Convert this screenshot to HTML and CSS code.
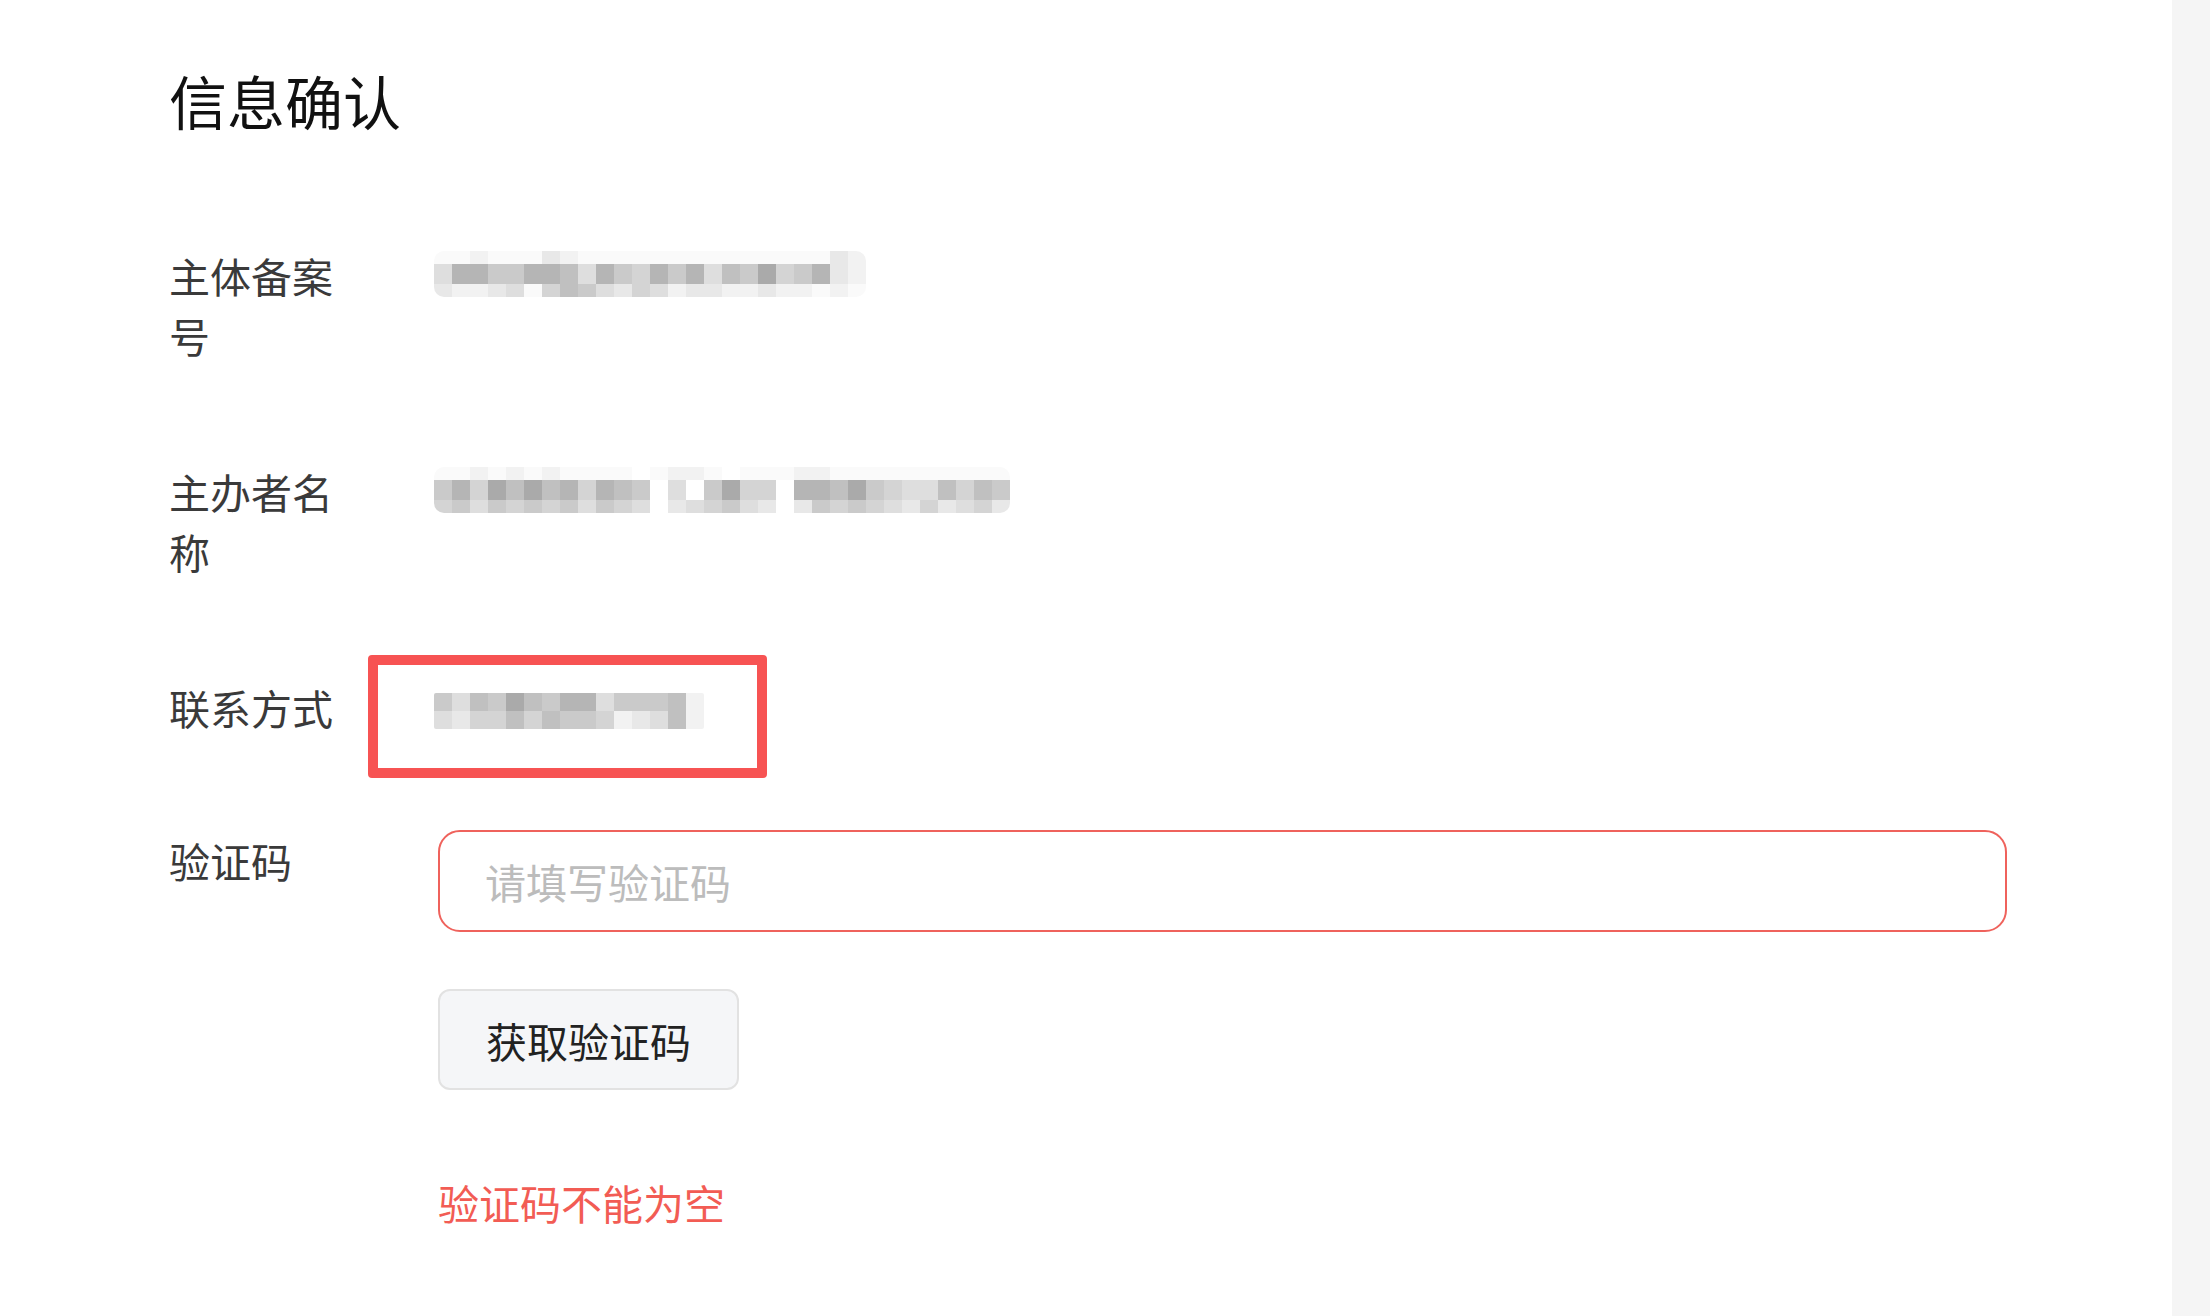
FILE: index.html
```html
<!DOCTYPE html>
<html lang="zh-CN">
<head>
    <meta charset="UTF-8">
    <meta name="viewport" content="width=device-width, initial-scale=1.0">
    <title>信息确认</title>
    <link rel="stylesheet" href="styles.css">
</head>
<body>
    <div class="page">
        <!-- 表单内容 -->
        <main class="content">
            <h1 class="title">信息确认</h1>

            <!-- 主体备案号 -->
            <div class="row">
                <div class="label">主体备案号</div>
                <div class="value">
                    <div class="mosaic wide">
                        <div class="band thin"><i class="w"></i><i class="w"></i><i class="h"></i><i class="w"></i><i class="w"></i><i class="w"></i><i class="g"></i><i class="h"></i><i class="w"></i><i class="w"></i><i class="w"></i><i class="w"></i><i class="w"></i><i class="w"></i><i class="w"></i><i class="w"></i><i class="w"></i><i class="w"></i><i class="w"></i><i class="w"></i><i class="w"></i><i class="w"></i><i class="g"></i><i class="h"></i></div>
                        <div class="band mid"><i class="f"></i><i class="b"></i><i class="b"></i><i class="d"></i><i class="d"></i><i class="b"></i><i class="b"></i><i class="c"></i><i class="f"></i><i class="b"></i><i class="d"></i><i class="e"></i><i class="b"></i><i class="d"></i><i class="b"></i><i class="f"></i><i class="c"></i><i class="d"></i><i class="a"></i><i class="e"></i><i class="d"></i><i class="b"></i><i class="g"></i><i class="h"></i></div>
                        <div class="band thin"><i class="g"></i><i class="h"></i><i class="h"></i><i class="g"></i><i class="f"></i><i class="w"></i><i class="e"></i><i class="c"></i><i class="d"></i><i class="f"></i><i class="g"></i><i class="e"></i><i class="f"></i><i class="h"></i><i class="g"></i><i class="g"></i><i class="h"></i><i class="h"></i><i class="g"></i><i class="h"></i><i class="h"></i><i class="w"></i><i class="h"></i><i class="w"></i></div>
                    </div>
                </div>
            </div>

            <!-- 主办者名称 -->
            <div class="row">
                <div class="label">主办者名称</div>
                <div class="value">
                    <div class="mosaic wide">
                        <div class="band thin"><i class="w"></i><i class="w"></i><i class="h"></i><i class="w"></i><i class="h"></i><i class="w"></i><i class="h"></i><i class="w"></i><i class="w"></i><i class="w"></i><i class="w"></i><i class="n"></i><i class="w"></i><i class="h"></i><i class="h"></i><i class="w"></i><i class="n"></i><i class="w"></i><i class="w"></i><i class="w"></i><i class="h"></i><i class="h"></i><i class="w"></i><i class="w"></i><i class="w"></i><i class="w"></i><i class="w"></i><i class="w"></i><i class="w"></i><i class="w"></i><i class="w"></i><i class="w"></i></div>
                        <div class="band mid"><i class="d"></i><i class="b"></i><i class="e"></i><i class="a"></i><i class="c"></i><i class="a"></i><i class="c"></i><i class="b"></i><i class="e"></i><i class="b"></i><i class="c"></i><i class="d"></i><i class="n"></i><i class="f"></i><i class="n"></i><i class="d"></i><i class="a"></i><i class="e"></i><i class="e"></i><i class="n"></i><i class="b"></i><i class="b"></i><i class="c"></i><i class="a"></i><i class="d"></i><i class="e"></i><i class="f"></i><i class="f"></i><i class="c"></i><i class="e"></i><i class="c"></i><i class="d"></i></div>
                        <div class="band thin"><i class="e"></i><i class="d"></i><i class="f"></i><i class="d"></i><i class="e"></i><i class="d"></i><i class="e"></i><i class="d"></i><i class="f"></i><i class="d"></i><i class="e"></i><i class="f"></i><i class="n"></i><i class="g"></i><i class="f"></i><i class="e"></i><i class="d"></i><i class="f"></i><i class="g"></i><i class="n"></i><i class="g"></i><i class="d"></i><i class="e"></i><i class="d"></i><i class="e"></i><i class="f"></i><i class="g"></i><i class="e"></i><i class="g"></i><i class="f"></i><i class="e"></i><i class="g"></i></div>
                    </div>
                </div>
            </div>

            <!-- 联系方式（红框标注） -->
            <div class="row tight">
                <div class="label">联系方式</div>
                <div class="value">
                    <div class="mosaic phone">
                        <div class="band"><i class="d"></i><i class="f"></i><i class="c"></i><i class="d"></i><i class="a"></i><i class="c"></i><i class="d"></i><i class="b"></i><i class="b"></i><i class="f"></i><i class="d"></i><i class="d"></i><i class="d"></i><i class="c"></i><i class="h"></i></div>
                        <div class="band"><i class="f"></i><i class="g"></i><i class="e"></i><i class="e"></i><i class="c"></i><i class="e"></i><i class="c"></i><i class="d"></i><i class="d"></i><i class="e"></i><i class="h"></i><i class="g"></i><i class="f"></i><i class="c"></i><i class="h"></i></div>
                    </div>
                    <span class="mark-box"></span>
                </div>
            </div>

            <!-- 验证码 -->
            <div class="row last">
                <div class="label">验证码</div>
                <div class="field">
                    <input class="code-input" type="text" placeholder="请填写验证码">
                    <button class="code-button" type="button">获取验证码</button>
                    <p class="error-text">验证码不能为空</p>
                </div>
            </div>
        </main>

        <!-- 右侧灰色边栏 -->
        <aside class="side"></aside>
    </div>
</body>
</html>
```

FILE: styles.css
```css
/* reset */
* {
    margin: 0;
    padding: 0;
    box-sizing: border-box;
}

body {
    font-family: "Noto Sans CJK SC", "Noto Sans", sans-serif;
    background-color: #fff;
    color: #3a3a3a;
}

.page {
    display: flex;
    min-height: 100vh;
}

/* 主内容区 */
.content {
    flex: 1;
    padding: 60px 165px 0 169px;
}

.side {
    width: 38px;
    background-color: #f5f5f5;
}

.title {
    font-size: 58px;
    font-weight: normal;
    line-height: 80px;
    color: #111;
    margin-bottom: 105px;
}

/* 每一行：标签 + 内容 */
.row {
    display: flex;
    margin-bottom: 96px;
}

.row.tight {
    margin-bottom: 93px;
}

.row.last {
    margin-bottom: 0;
}

.label {
    width: 182px;
    margin-right: 87px;
    font-size: 41px;
    line-height: 60px;
    color: #3a3a3a;
}

.value {
    position: relative;
    flex: 1;
}

/* 打码区域 */
.mosaic {
    display: inline-flex;
    flex-direction: column;
    margin-left: -4px;
    margin-top: 6px;
    border-radius: 10px;
    overflow: hidden;
}

.mosaic.phone {
    margin-top: 16px;
    border-radius: 2px;
}

.band {
    display: flex;
}

.band i {
    display: block;
    width: 18px;
    height: 18px;
}

.band.thin i {
    height: 13px;
}

.band.mid i {
    height: 20px;
}

.band .a { background-color: #aaaaaa; }
.band .b { background-color: #b5b5b5; }
.band .c { background-color: #c0c0c0; }
.band .d { background-color: #cacaca; }
.band .e { background-color: #d4d4d4; }
.band .f { background-color: #dedede; }
.band .g { background-color: #e8e8e8; }
.band .h { background-color: #f2f2f2; }
.band .w { background-color: #fafafa; }
.band .n { background-color: #fff; }

/* 截图上的红色标注框 */
.mark-box {
    position: absolute;
    left: -70px;
    top: -22px;
    width: 399px;
    height: 123px;
    border: 10px solid #f75353;
    border-radius: 4px;
}

/* 验证码输入 */
.field {
    flex: 1;
    display: flex;
    flex-direction: column;
    align-items: flex-start;
}

.code-input {
    width: 100%;
    height: 102px;
    padding: 0 45px;
    border: 2px solid #ef625c;
    border-radius: 22px;
    font-family: inherit;
    font-size: 41px;
    color: #333;
    outline: none;
}

.code-input::placeholder {
    color: #bcbcbc;
}

.code-button {
    margin-top: 57px;
    height: 101px;
    padding: 0 46px;
    border: 2px solid #e2e2e2;
    border-radius: 12px;
    background-color: #f5f6f8;
    font-family: inherit;
    font-size: 41px;
    color: #222;
    cursor: pointer;
}

.error-text {
    margin-top: 82px;
    font-size: 41px;
    line-height: 60px;
    color: #f25c54;
}
```
